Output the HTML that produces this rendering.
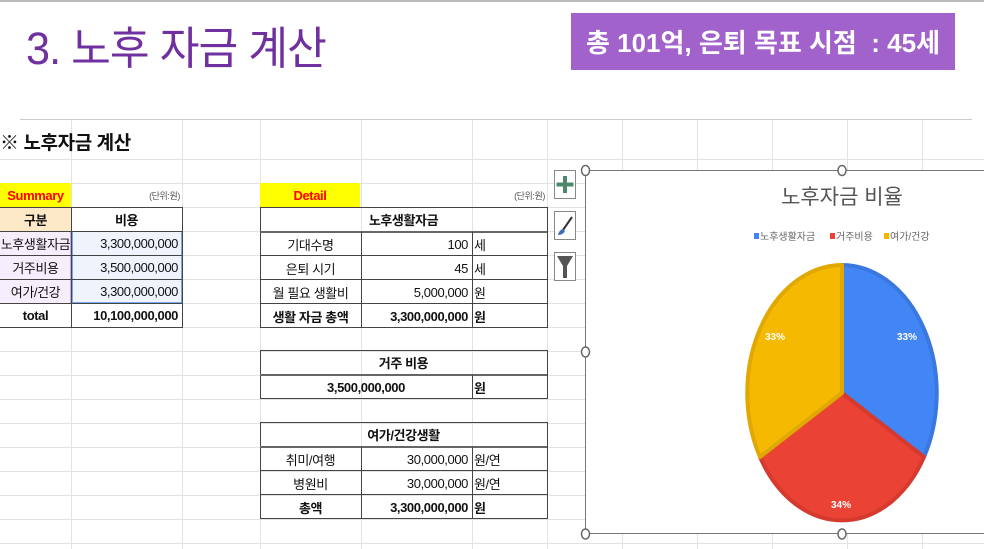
<!DOCTYPE html>
<html><head><meta charset="utf-8"><style>
*{margin:0;padding:0;box-sizing:border-box}
body{width:984px;height:549px;overflow:hidden;background:#fff;position:relative;font-family:"Liberation Sans","Noto Sans CJK KR",sans-serif;color:#111}
.a{position:absolute}
.c{position:absolute;display:flex;align-items:center;font-size:13px;white-space:nowrap;letter-spacing:-0.4px}
.b{font-weight:bold}
.ctr{justify-content:center}.r{justify-content:flex-end;padding-right:4px}.l{padding-left:2px}
.box{position:absolute;border:1px solid #444}
</style></head><body>
<div class="a" style="left:0;top:0;width:984px;height:2px;background:#bbb"></div>
<div class="a" style="left:26px;top:12px;font-size:45px;color:#7030a0;letter-spacing:-1px;transform:scaleX(0.96);transform-origin:left">3. 노후 자금 계산</div>
<div class="a" style="left:571px;top:13px;width:384px;height:57px;background:#a262cc;color:#fff;font-size:26px;font-weight:bold;display:flex;align-items:center;justify-content:center;white-space:nowrap">총 101억, 은퇴 목표 시점 &nbsp;: 45세</div>

<svg class="a" style="left:0;top:0" width="984" height="549">
<g stroke="#e3e3e3" stroke-width="1">
<line x1="20" y1="119.5" x2="972" y2="119.5" stroke="#ccc"/>
<line x1="0" y1="159.5" x2="984" y2="159.5"/>
<line x1="0" y1="183.5" x2="984" y2="183.5"/>
<line x1="0" y1="207.5" x2="984" y2="207.5"/>
<line x1="0" y1="231.5" x2="984" y2="231.5"/>
<line x1="0" y1="255.5" x2="984" y2="255.5"/>
<line x1="0" y1="279.5" x2="984" y2="279.5"/>
<line x1="0" y1="303.5" x2="984" y2="303.5"/>
<line x1="0" y1="327.5" x2="984" y2="327.5"/>
<line x1="0" y1="351.5" x2="984" y2="351.5"/>
<line x1="0" y1="375.5" x2="984" y2="375.5"/>
<line x1="0" y1="399.5" x2="984" y2="399.5"/>
<line x1="0" y1="423.5" x2="984" y2="423.5"/>
<line x1="0" y1="447.5" x2="984" y2="447.5"/>
<line x1="0" y1="471.5" x2="984" y2="471.5"/>
<line x1="0" y1="495.5" x2="984" y2="495.5"/>
<line x1="0" y1="519.5" x2="984" y2="519.5"/>
<line x1="0" y1="543.5" x2="984" y2="543.5"/>
<line x1="71.5" y1="120" x2="71.5" y2="549"/>
<line x1="182.5" y1="120" x2="182.5" y2="549"/>
<line x1="260.5" y1="120" x2="260.5" y2="549"/>
<line x1="361.5" y1="120" x2="361.5" y2="549"/>
<line x1="472.5" y1="120" x2="472.5" y2="549"/>
<line x1="547.5" y1="120" x2="547.5" y2="549"/>
<line x1="622.5" y1="120" x2="622.5" y2="549"/>
<line x1="697.5" y1="120" x2="697.5" y2="549"/>
<line x1="772.5" y1="120" x2="772.5" y2="549"/>
<line x1="847.5" y1="120" x2="847.5" y2="549"/>
<line x1="922.5" y1="120" x2="922.5" y2="549"/>
</g>
</svg>

<div class="c b" style="left:0;top:126px;height:30px;font-size:19px">※ 노후자금 계산</div>

<!-- Summary -->
<div class="a" style="left:0;top:183px;width:71px;height:24px;background:#ffff00"></div>
<div class="c b ctr" style="left:0;top:183px;width:71px;height:24px;color:#f00;font-size:13px">Summary</div>
<div class="c r" style="left:71px;top:183px;width:111px;height:24px;font-size:9px;color:#555;padding-right:2px">(단위:원)</div>
<div class="a" style="left:0;top:207px;width:71px;height:24px;background:#fde9c8"></div>
<div class="a" style="left:0;top:231px;width:71px;height:72px;background:#f6eefc;border-right:1px solid #c9a8ee"></div>
<div class="a" style="left:72px;top:231px;width:110px;height:72px;background:#eef3fc;border:1px solid #7aa7ec"></div>
<div class="box" style="left:-1px;top:207px;width:184px;height:121px;border-top:1px solid #444"></div>
<div class="a" style="left:71px;top:207px;width:1px;height:120px;background:#444"></div>
<div class="a" style="left:0;top:231px;width:182px;height:1px;background:#444"></div>
<div class="a" style="left:0;top:255px;width:182px;height:1px;background:#444"></div>
<div class="a" style="left:0;top:279px;width:182px;height:1px;background:#444"></div>
<div class="a" style="left:0;top:303px;width:182px;height:1px;background:#444"></div>
<div class="c b ctr" style="left:0;top:207px;width:71px;height:24px">구분</div>
<div class="c b ctr" style="left:71px;top:207px;width:111px;height:24px">비용</div>
<div class="c ctr" style="left:0;top:231px;width:71px;height:24px">노후생활자금</div>
<div class="c r" style="left:71px;top:231px;width:111px;height:24px">3,300,000,000</div>
<div class="c ctr" style="left:0;top:255px;width:71px;height:24px">거주비용</div>
<div class="c r" style="left:71px;top:255px;width:111px;height:24px">3,500,000,000</div>
<div class="c ctr" style="left:0;top:279px;width:71px;height:24px">여가/건강</div>
<div class="c r" style="left:71px;top:279px;width:111px;height:24px">3,300,000,000</div>
<div class="c b ctr" style="left:0;top:303px;width:71px;height:24px">total</div>
<div class="c b r" style="left:71px;top:303px;width:111px;height:24px">10,100,000,000</div>

<!-- Detail -->
<div class="a" style="left:260px;top:183px;width:100px;height:24px;background:#ffff00"></div>
<div class="c b ctr" style="left:260px;top:183px;width:100px;height:24px;color:#f00">Detail</div>
<div class="c r" style="left:472px;top:183px;width:75px;height:24px;font-size:9px;color:#555;padding-right:2px">(단위:원)</div>

<div class="box" style="left:260px;top:207px;width:288px;height:121px"></div>
<div class="a" style="left:260px;top:231px;width:287px;height:2px;background:#666"></div>
<div class="a" style="left:260px;top:255px;width:287px;height:1px;background:#444"></div>
<div class="a" style="left:260px;top:279px;width:287px;height:1px;background:#444"></div>
<div class="a" style="left:260px;top:303px;width:287px;height:1px;background:#444"></div>
<div class="a" style="left:361px;top:232px;width:1px;height:95px;background:#444"></div>
<div class="a" style="left:472px;top:232px;width:1px;height:95px;background:#444"></div>
<div class="c b ctr" style="left:260px;top:207px;width:287px;height:24px">노후생활자금</div>
<div class="c ctr" style="left:260px;top:232px;width:101px;height:24px">기대수명</div>
<div class="c r" style="left:361px;top:232px;width:111px;height:24px">100</div>
<div class="c l" style="left:472px;top:232px;width:75px;height:24px">세</div>
<div class="c ctr" style="left:260px;top:256px;width:101px;height:24px">은퇴 시기</div>
<div class="c r" style="left:361px;top:256px;width:111px;height:24px">45</div>
<div class="c l" style="left:472px;top:256px;width:75px;height:24px">세</div>
<div class="c ctr" style="left:260px;top:280px;width:101px;height:24px">월 필요 생활비</div>
<div class="c r" style="left:361px;top:280px;width:111px;height:24px">5,000,000</div>
<div class="c l" style="left:472px;top:280px;width:75px;height:24px">원</div>
<div class="c b ctr" style="left:260px;top:304px;width:101px;height:24px">생활 자금 총액</div>
<div class="c b r" style="left:361px;top:304px;width:111px;height:24px">3,300,000,000</div>
<div class="c b l" style="left:472px;top:304px;width:75px;height:24px">원</div>

<div class="box" style="left:260px;top:350px;width:288px;height:49px"></div>
<div class="a" style="left:260px;top:374px;width:287px;height:2px;background:#666"></div>
<div class="a" style="left:472px;top:375px;width:1px;height:23px;background:#444"></div>
<div class="c b ctr" style="left:260px;top:350px;width:287px;height:24px">거주 비용</div>
<div class="c b ctr" style="left:260px;top:375px;width:212px;height:24px">3,500,000,000</div>
<div class="c b l" style="left:472px;top:375px;width:75px;height:24px">원</div>

<div class="box" style="left:260px;top:422px;width:288px;height:97px"></div>
<div class="a" style="left:260px;top:446px;width:287px;height:2px;background:#666"></div>
<div class="a" style="left:260px;top:470px;width:287px;height:1px;background:#444"></div>
<div class="a" style="left:260px;top:494px;width:287px;height:1px;background:#444"></div>
<div class="a" style="left:361px;top:447px;width:1px;height:71px;background:#444"></div>
<div class="a" style="left:472px;top:447px;width:1px;height:71px;background:#444"></div>
<div class="c b ctr" style="left:260px;top:422px;width:287px;height:24px">여가/건강생활</div>
<div class="c ctr" style="left:260px;top:447px;width:101px;height:24px">취미/여행</div>
<div class="c r" style="left:361px;top:447px;width:111px;height:24px">30,000,000</div>
<div class="c l" style="left:472px;top:447px;width:75px;height:24px">원/연</div>
<div class="c ctr" style="left:260px;top:471px;width:101px;height:24px">병원비</div>
<div class="c r" style="left:361px;top:471px;width:111px;height:24px">30,000,000</div>
<div class="c l" style="left:472px;top:471px;width:75px;height:24px">원/연</div>
<div class="c b ctr" style="left:260px;top:495px;width:101px;height:24px">총액</div>
<div class="c b r" style="left:361px;top:495px;width:111px;height:24px">3,300,000,000</div>
<div class="c b l" style="left:472px;top:495px;width:75px;height:24px">원</div>

<!-- chart -->
<svg class="a" style="left:540px;top:160px" width="444" height="389">
<rect x="45.5" y="10.5" width="410" height="363" fill="#fff" stroke="#777"/>
<g fill="#fff" stroke="#666" stroke-width="1.5">
<ellipse cx="45.5" cy="10.5" rx="4" ry="5"/><ellipse cx="302" cy="10.5" rx="4" ry="5"/>
<ellipse cx="45.5" cy="192" rx="4" ry="5"/><ellipse cx="45.5" cy="374" rx="4" ry="5"/><ellipse cx="302" cy="374" rx="4" ry="5"/>
</g>
<rect x="14.5" y="10.5" width="21" height="28" fill="#fff" stroke="#888"/>
<path d="M25 16v17M16.5 24.5h17" stroke="#4a8a6a" stroke-width="4"/>
<rect x="14.5" y="51.5" width="21" height="28" fill="#fff" stroke="#888"/>
<path d="M32 57 L23 70" stroke="#333" stroke-width="2"/><path d="M23 69 q-4 1 -5 6 q5 0 7 -4z" fill="#3b6fb6"/>
<rect x="14.5" y="92.5" width="21" height="28" fill="#fff" stroke="#888"/>
<path d="M17 96h16l-6 10v12h-4v-12z" fill="#555"/>
<text x="302" y="44" font-size="21" fill="#555" text-anchor="middle" font-family="Liberation Sans,Noto Sans CJK KR,sans-serif">노후자금 비율</text>
<g font-size="10" fill="#666" font-family="Liberation Sans,Noto Sans CJK KR,sans-serif">
<rect x="214" y="73" width="5" height="6" fill="#4285f4"/><text x="220" y="80">노후생활자금</text>
<rect x="290" y="73" width="5" height="6" fill="#ea4335"/><text x="296" y="80">거주비용</text>
<rect x="344" y="73" width="5" height="6" fill="#f4b400"/><text x="350" y="80">여가/건강</text>
</g>
<g stroke-width="4" stroke-linejoin="round">
<path d="M302 233 L302 105 A95 128 0 0 1 384 297 Z" fill="#4285f4" stroke="#3a78e0"/>
<path d="M302 233 L384 297 A95 128 0 0 1 220 297 Z" fill="#ea4335" stroke="#d63a2e"/>
<path d="M302 233 L220 297 A95 128 0 0 1 302 105 Z" fill="#f4b900" stroke="#e0a800"/>
</g>
<g font-size="10" font-weight="bold" fill="#fff" text-anchor="middle" font-family="Liberation Sans,sans-serif">
<text x="367" y="180">33%</text><text x="235" y="180">33%</text><text x="301" y="348">34%</text>
</g>
</svg>
</body></html>
